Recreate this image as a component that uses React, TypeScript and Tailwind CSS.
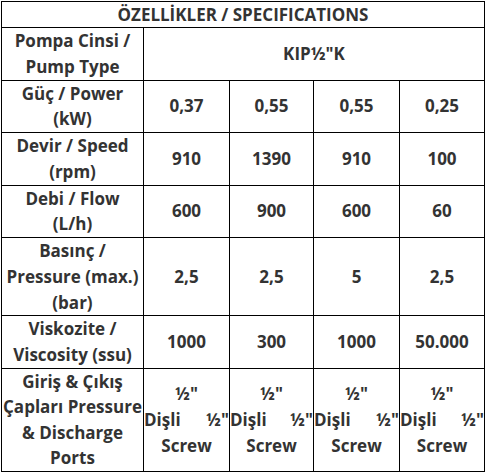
import React from "react";

const cell = "border-r border-b border-black flex items-center justify-center text-center";

function Row({ label, values }: { label: React.ReactNode; values: string[] }) {
  return (
    <>
      <div className={cell}>{label}</div>
      {values.map((v, i) => (
        <div key={i} className={cell}>
          {v}
        </div>
      ))}
    </>
  );
}

function PortCell() {
  return (
    <div className="border-r border-b border-black flex flex-col justify-center">
      <div className="text-center">{'½"'}</div>
      <div className="flex justify-between whitespace-nowrap">
        <span>Dişli</span>
        <span>{'½"'}</span>
      </div>
      <div className="text-center">Screw</div>
    </div>
  );
}

export default function App() {
  return (
    <div className="bg-white w-[486px] h-[475px] pt-[1px] pl-[1px]">
      <div
        className="grid grid-cols-[142px_86px_84px_86px_85px] w-[484px] border-l border-t border-black text-[#333333] font-bold text-[17px] leading-[25.75px]"
        style={{ fontFamily: '"Open Sans", "Noto Sans", sans-serif' }}
      >
        <div className="col-span-5 border-r border-b border-black text-center leading-[25px]">
          ÖZELLİKLER / SPECIFICATIONS
        </div>
        <div className={cell}>
          Pompa Cinsi /<br />Pump Type
        </div>
        <div className={`${cell} col-span-4`}>{'KIP½"K'}</div>
        <Row label={<>Güç / Power<br />(kW)</>} values={["0,37", "0,55", "0,55", "0,25"]} />
        <Row label={<>Devir / Speed<br />(rpm)</>} values={["910", "1390", "910", "100"]} />
        <Row label={<>Debi / Flow<br />(L/h)</>} values={["600", "900", "600", "60"]} />
        <Row
          label={<>Basınç /<br />Pressure (max.)<br />(bar)</>}
          values={["2,5", "2,5", "5", "2,5"]}
        />
        <Row
          label={<>Viskozite /<br />Viscosity (ssu)</>}
          values={["1000", "300", "1000", "50.000"]}
        />
        <div className={`${cell} leading-[25.5px]`}>
          Giriş &amp; Çıkış<br />Çapları Pressure<br />&amp; Discharge<br />Ports
        </div>
        <PortCell />
        <PortCell />
        <PortCell />
        <PortCell />
      </div>
    </div>
  );
}
